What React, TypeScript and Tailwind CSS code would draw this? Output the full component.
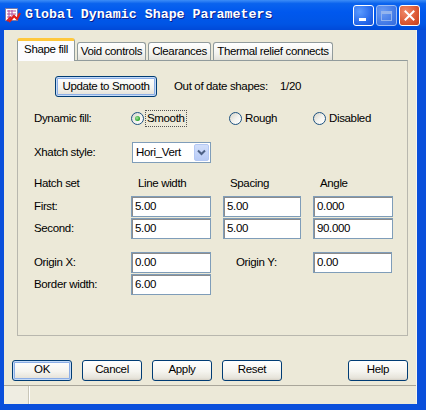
import React from 'react';

// XP-style dialog: Global Dynamic Shape Parameters

const FONT = "font-['Liberation_Sans',Arial,sans-serif]";

function TitleIcon() {
  return (
    <svg width="16" height="15" viewBox="0 0 16 15" className="shrink-0">
      <rect x="0.5" y="0.5" width="12" height="12" fill="#fff" stroke="#7a7aa8" />
      <path d="M2 3h9M2 6h9M2 9h5M4 2v9M7 2v6" stroke="#b04a9a" strokeWidth="1" />
      <path d="M4 14 L9 8 L12 11 L15 5" stroke="#e0201a" strokeWidth="2.2" fill="none" />
      <path d="M2 13 L6 9" stroke="#e0201a" strokeWidth="2" />
    </svg>
  );
}

function TitleBar() {
  return (
    <div className="h-[30px] shrink-0 flex items-center bg-[linear-gradient(180deg,#3D8DF7_0%,#0A63EE_12%,#0058EE_40%,#0055E5_80%,#0049D8_100%)] pl-[5px] pr-[6px]">
      <TitleIcon />
      <span className="ml-[4px] font-['Liberation_Mono',monospace] font-bold text-[13.3px] tracking-normal text-white [text-shadow:1px_1px_0_#0A1E8C] whitespace-nowrap">
        Global Dynamic Shape Parameters
      </span>
      <div className="ml-auto flex gap-[2px] mt-[1px]">
        <div className="w-[21px] h-[21px] rounded-[3px] border border-white bg-[radial-gradient(circle_at_30%_30%,#5C9BFF,#2163E8_70%,#1A52D4)] flex items-end pl-[5px] pb-[4px]">
          <span className="w-[7px] h-[3px] bg-white" />
        </div>
        <div className="w-[21px] h-[21px] rounded-[3px] border border-[#9DBDF5] bg-[radial-gradient(circle_at_30%_30%,#6C9CF2,#3F77E6_70%,#356BDC)] flex items-center justify-center">
          <span className="w-[11px] h-[10px] border border-[#93B4EE] border-t-[3px]" />
        </div>
        <div className="w-[21px] h-[21px] rounded-[3px] border border-white bg-[radial-gradient(circle_at_30%_30%,#F08A6A,#D9532E_65%,#C2401E)] flex items-center justify-center">
          <svg width="11" height="11" viewBox="0 0 11 11">
            <path d="M1.5 1.5 L9.5 9.5 M9.5 1.5 L1.5 9.5" stroke="#fff" strokeWidth="2" strokeLinecap="square" />
          </svg>
        </div>
      </div>
    </div>
  );
}

function XPButton({
  label,
  width = 60,
  focused = false,
}: {
  label: string;
  width?: number;
  focused?: boolean;
}) {
  return (
    <div
      className={`h-[21px] shrink-0 rounded-[3px] border border-[#003C74] flex items-center justify-center whitespace-nowrap bg-[linear-gradient(180deg,#FFFFFF_0%,#F5F4EF_55%,#E6E3DA_90%,#D6D0C5_100%)] ${
        focused ? 'shadow-[inset_0_0_0_1px_#C5DBF7,inset_0_0_0_2px_#8CAEE6]' : ''
      }`}
      style={{ width }}
    >
      {label}
    </div>
  );
}

function Radio({ checked = false }: { checked?: boolean }) {
  return (
    <span className="w-[13px] h-[13px] shrink-0 rounded-full border border-[#1C5180] bg-[linear-gradient(135deg,#D6D3C8_0%,#F4F4F0_55%,#FFFFFF_100%)] flex items-center justify-center">
      {checked && (
        <span className="w-[5px] h-[5px] rounded-full bg-[radial-gradient(circle_at_40%_40%,#A6E3A6,#21A121_70%)]" />
      )}
    </span>
  );
}

function Field({ value, width = 80 }: { value: string; width?: number }) {
  return (
    <div
      className="h-[21px] shrink-0 border border-[#7F9DB9] bg-white shadow-[inset_1px_1px_0_#8C8C8C] flex items-center pl-[3px]"
      style={{ width }}
    >
      {value}
    </div>
  );
}

function Tab({ label, width, active = false }: { label: string; width: number; active?: boolean }) {
  if (active) {
    return (
      <div
        className="h-[23px] -mb-[1px] relative z-10 shrink-0 rounded-t-[3px] border-x border-[#919B9C] border-t-[3px] border-t-[#FFC83C] bg-[#FCFCFE] flex items-center justify-center pb-[2px] whitespace-nowrap"
        style={{ width }}
      >
        {label}
      </div>
    );
  }
  return (
    <div
      className="h-[18px] shrink-0 rounded-t-[3px] border border-b-0 border-[#919B9C] bg-[linear-gradient(180deg,#FFFFFF_0%,#F3F3EF_60%,#E3E2DA_100%)] flex items-center justify-center whitespace-nowrap"
      style={{ width }}
    >
      {label}
    </div>
  );
}

export default function App() {
  return (
    <div className={`w-[426px] h-[410px] flex flex-col bg-[#0A4FDB] overflow-hidden text-[11.5px] tracking-[-0.35px] leading-none text-black whitespace-nowrap ${FONT}`}>
      <TitleBar />

      <div className="flex-1 ml-[4px] mr-[9px] mb-[6px] bg-[#ECE9D8] flex flex-col border-r border-[#F6F5EF]">
        {/* tabs */}
        <div className="pl-[13px] pt-[8px]">
          <div className="h-[22px] flex items-end gap-[2px]">
            <Tab label="Shape fill" width={58} active />
            <Tab label="Void controls" width={69} />
            <Tab label="Clearances" width={63} />
            <Tab label="Thermal relief connects" width={120} />
          </div>

          {/* tab panel */}
          <div className="w-[391px] h-[276px] border border-[#B8B7AE] border-t-[#919B9C] bg-[#ECE9D8] flex flex-col">
            {/* update row */}
            <div className="mt-[15px] h-[21px] flex items-center">
              <div className="ml-[37px]">
                <XPButton label="Update to Smooth" width={102} focused />
              </div>
              <span className="ml-[17px] w-[106px]">Out of date shapes:</span>
              <span>1/20</span>
            </div>

            {/* dynamic fill */}
            <div className="mt-[13px] h-[17px] flex items-center pl-[16px]">
              <span className="w-[97px]">Dynamic fill:</span>
              <div className="w-[98px] flex items-center">
                <Radio checked />
                <span className="ml-[2px] px-[1px] py-[2px] outline outline-1 outline-dotted outline-[#555]">Smooth</span>
              </div>
              <div className="w-[84px] flex items-center">
                <Radio />
                <span className="ml-[3px]">Rough</span>
              </div>
              <div className="flex items-center">
                <Radio />
                <span className="ml-[3px]">Disabled</span>
              </div>
            </div>

            {/* xhatch style */}
            <div className="mt-[15px] h-[21px] flex items-center pl-[16px]">
              <span className="w-[97px]">Xhatch style:</span>
              <div className="w-[79px] h-[21px] ml-[1px] border border-[#7F9DB9] bg-white flex items-center pl-[3px] pr-[1px]">
                <span className="flex-1">Hori_Vert</span>
                <div className="w-[15px] h-[17px] rounded-[2px] bg-[linear-gradient(180deg,#D2DFFB_0%,#B8CBF6_100%)] border border-[#B4C8F4] flex items-center justify-center">
                  <svg width="9" height="7" viewBox="0 0 9 7">
                    <path d="M1 1.5 L4.5 5 L8 1.5" stroke="#4D6185" strokeWidth="2" fill="none" />
                  </svg>
                </div>
              </div>
            </div>

            {/* hatch headers */}
            <div className="mt-[13px] h-[16px] flex items-center pl-[16px]">
              <span className="w-[104px]">Hatch set</span>
              <span className="w-[92px]">Line width</span>
              <span className="w-[90px]">Spacing</span>
              <span>Angle</span>
            </div>

            {/* first */}
            <div className="mt-[4px] h-[21px] flex items-center pl-[16px]">
              <span className="w-[97px]">First:</span>
              <Field value="5.00" width={80} />
              <div className="ml-[12px]"><Field value="5.00" width={78} /></div>
              <div className="ml-[12px]"><Field value="0.000" width={80} /></div>
            </div>

            {/* second */}
            <div className="mt-[1px] h-[21px] flex items-center pl-[16px]">
              <span className="w-[97px]">Second:</span>
              <Field value="5.00" width={80} />
              <div className="ml-[12px]"><Field value="5.00" width={78} /></div>
              <div className="ml-[12px]"><Field value="90.000" width={80} /></div>
            </div>

            {/* origin */}
            <div className="mt-[13px] h-[21px] flex items-center pl-[16px]">
              <span className="w-[97px]">Origin X:</span>
              <Field value="0.00" width={80} />
              <span className="ml-[25px] w-[77px]">Origin Y:</span>
              <Field value="0.00" width={79} />
            </div>

            {/* border width */}
            <div className="mt-[1px] h-[21px] flex items-center pl-[16px]">
              <span className="w-[97px]">Border width:</span>
              <Field value="6.00" width={80} />
            </div>
          </div>
        </div>

        {/* bottom buttons */}
        <div className="mt-[24px] h-[20px] flex items-center pl-[8px]">
          <XPButton label="OK" focused />
          <div className="ml-[10px]"><XPButton label="Cancel" /></div>
          <div className="ml-[10px]"><XPButton label="Apply" /></div>
          <div className="ml-[10px]"><XPButton label="Reset" /></div>
          <div className="ml-[66px]"><XPButton label="Help" /></div>
        </div>

        {/* status bar */}
        <div className="mt-[5px] flex-1 border-t border-[#A9A69A] flex">
          <div className="w-[25px] bg-[#EFEDE2] border-r border-[#C9C6B8]" />
          <div className="w-px bg-white" />
          <div className="flex-1" />
        </div>
      </div>
    </div>
  );
}
